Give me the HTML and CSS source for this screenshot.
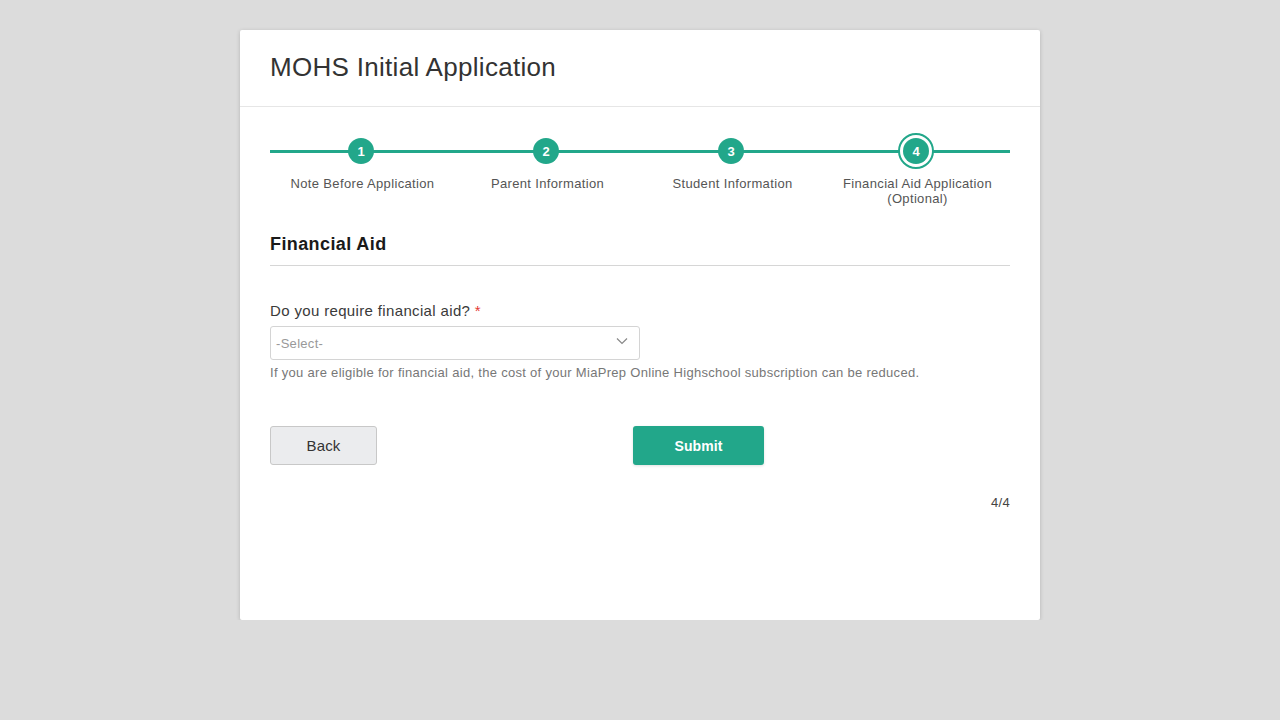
FILE: index.html
```
<!DOCTYPE html>
<html>
<head>
<meta charset="utf-8">
<link rel="stylesheet" href="styles.css">
</head>
<body>
<div class="card">
  <div class="card-header">
    <h1 class="title">MOHS Initial Application</h1>
  </div>
  <div class="card-body">
    <div class="stepper">
      <div class="step done">
        <div class="dot-wrap"><span class="dot">1</span></div>
        <div class="step-label">Note Before Application</div>
      </div>
      <div class="step done">
        <div class="dot-wrap"><span class="dot">2</span></div>
        <div class="step-label">Parent Information</div>
      </div>
      <div class="step done">
        <div class="dot-wrap"><span class="dot">3</span></div>
        <div class="step-label">Student Information</div>
      </div>
      <div class="step active">
        <div class="dot-wrap"><span class="dot">4</span></div>
        <div class="step-label">Financial Aid Application<br>(Optional)</div>
      </div>
    </div>

    <h2 class="section-title">Financial Aid</h2>

    <div class="field">
      <label class="field-label">Do you require financial aid? <span class="req">*</span></label>
      <div class="select">
        <span class="placeholder">-Select-</span>
        <svg class="chev" width="12" height="8" viewBox="0 0 12 8"><path d="M1 1.5 L6 6.5 L11 1.5" fill="none" stroke="#888" stroke-width="1.2"/></svg>
      </div>
      <div class="help">If you are eligible for financial aid, the cost of your MiaPrep Online Highschool subscription can be reduced.</div>
    </div>

    <div class="actions">
      <button class="btn btn-back">Back</button>
      <button class="btn btn-submit">Submit</button>
    </div>

    <div class="pager">4/4</div>
  </div>
</div>
</body>
</html>
```
FILE: styles.css
```
* { box-sizing: border-box; }
html, body { margin: 0; padding: 0; }
body {
  background: #dcdcdc;
  font-family: "Liberation Sans", Arial, sans-serif;
  color: #333;
  padding-top: 30px;
}
.card {
  width: 800px;
  height: 590px;
  margin: 0 auto;
  background: #fff;
  box-shadow: 0 1px 4px rgba(0,0,0,0.18);
  border-radius: 2px;
}
.card-header {
  height: 77px;
  border-bottom: 1px solid #e6e6e6;
  padding: 0 30px;
  display: flex;
  align-items: center;
}
.title {
  margin: 0;
  margin-top: -3px;
  font-size: 26px;
  font-weight: 400;
  line-height: 30px;
  letter-spacing: 0.3px;
  color: #333;
}
.card-body {
  padding: 26px 30px 0;
}
.stepper {
  display: flex;
  position: relative;
}
.stepper::before {
  content: "";
  position: absolute;
  left: 0; right: 0;
  top: 17px;
  height: 3px;
  background: #22a78a;
}
.step {
  flex: 1;
  display: flex;
  flex-direction: column;
  align-items: center;
  position: relative;
}
.dot-wrap {
  width: 36px;
  height: 36px;
  margin-right: 3px;
  display: flex;
  align-items: center;
  justify-content: center;
  border-radius: 50%;
}
.dot {
  width: 26px;
  height: 26px;
  border-radius: 50%;
  background: #22a78a;
  color: #fff;
  font-size: 13px;
  font-weight: 700;
  display: flex;
  align-items: center;
  justify-content: center;
}
.step.active .dot-wrap {
  border: 2px solid #22a78a;
  background: #fff;
}
.step-label {
  margin-top: 7px;
  font-size: 13px;
  line-height: 15px;
  color: #555;
  text-align: center;
  letter-spacing: 0.35px;
}
.section-title {
  margin: 27px 0 0;
  font-size: 18px;
  line-height: 22px;
  font-weight: 700;
  letter-spacing: 0.4px;
  color: #1a1a1a;
  padding-bottom: 10px;
  border-bottom: 1px solid #d6d6d6;
}
.field { margin-top: 36px; }
.field-label {
  display: block;
  font-size: 15px;
  letter-spacing: 0.35px;
  color: #3a3a3a;
  line-height: 18px;
}
.req { color: #e53935; }
.select {
  margin-top: 6px;
  width: 370px;
  height: 34px;
  border: 1px solid #d4d4d4;
  border-radius: 3px;
  display: flex;
  align-items: center;
  justify-content: space-between;
  padding: 0 11px 0 5px;
}
.placeholder {
  color: #999;
  font-size: 13px;
  letter-spacing: 0.3px;
}
.chev { margin-top: -4px; }
.help {
  margin-top: 5px;
  font-size: 13px;
  color: #777;
  letter-spacing: 0.3px;
  line-height: 16px;
}
.actions {
  margin-top: 45px;
  display: flex;
  gap: 256px;
}
.btn {
  height: 39px;
  border-radius: 3px;
  font-family: inherit;
  font-size: 15px;
  letter-spacing: 0.2px;
  cursor: pointer;
}
.btn-back {
  width: 107px;
  background: #ebecee;
  border: 1px solid #c8c8c8;
  color: #333;
}
.btn-submit {
  width: 131px;
  background: #22a78a;
  border: none;
  color: #fff;
  font-size: 14px;
  font-weight: 700;
  letter-spacing: 0.1px;
  box-shadow: 0 1px 3px rgba(0,0,0,0.12);
}
.pager {
  margin-top: 30px;
  text-align: right;
  font-size: 13px;
  color: #444;
  letter-spacing: 0.3px;
}
```
